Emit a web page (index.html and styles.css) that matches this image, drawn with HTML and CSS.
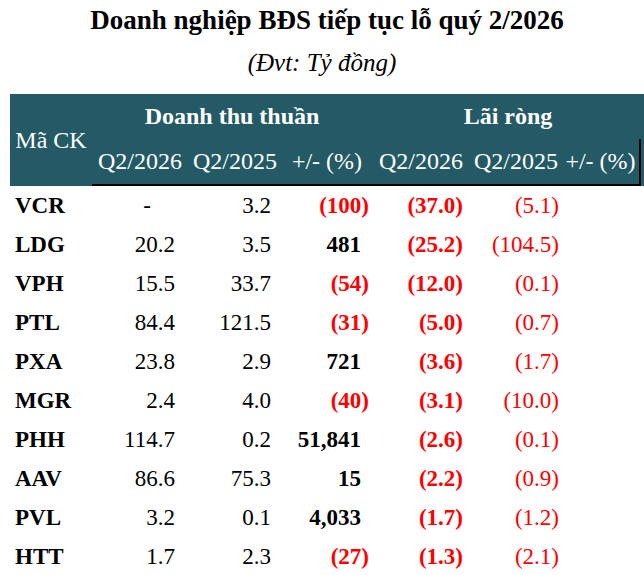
FILE: index.html
```html
<!DOCTYPE html>
<html lang="vi">
<head>
<meta charset="utf-8">
<title>Doanh nghiệp BĐS tiếp tục lỗ quý 2/2026</title>
<link rel="stylesheet" href="styles.css">
</head>
<body>
<h1 class="title">Doanh nghiệp BĐS tiếp tục lỗ quý 2/2026</h1>
<p class="unit">(Đvt: Tỷ đồng)</p>
<table class="report">
  <colgroup>
    <col class="w0"><col class="w1"><col class="w2"><col class="w3"><col class="w4"><col class="w5"><col class="w6"><col class="w7">
  </colgroup>
  <thead>
    <tr class="group-row">
      <th class="corner" rowspan="2">Mã CK</th>
      <th class="group" colspan="3">Doanh thu thuần</th>
      <th class="group" colspan="4">Lãi ròng</th>
    </tr>
    <tr class="sub-row">
      <th class="sub">Q2/2026</th>
      <th class="sub">Q2/2025</th>
      <th class="sub">+/- (%)</th>
      <th class="sub">Q2/2026</th>
      <th class="sub">Q2/2025</th>
      <th class="sub sub-last">+/- (%)</th>
      <th class="edge"></th>
    </tr>
  </thead>
  <tbody>
    <tr><td class="tk">VCR</td><td class="c1"><span class="dash">-</span></td><td class="c2">3.2</td><td class="c3 neg">(100)</td><td class="c4">(37.0)</td><td class="c5">(5.1)</td><td></td><td></td></tr>
    <tr><td class="tk">LDG</td><td class="c1">20.2</td><td class="c2">3.5</td><td class="c3 pos">481</td><td class="c4">(25.2)</td><td class="c5">(104.5)</td><td></td><td></td></tr>
    <tr><td class="tk">VPH</td><td class="c1">15.5</td><td class="c2">33.7</td><td class="c3 neg">(54)</td><td class="c4">(12.0)</td><td class="c5">(0.1)</td><td></td><td></td></tr>
    <tr><td class="tk">PTL</td><td class="c1">84.4</td><td class="c2">121.5</td><td class="c3 neg">(31)</td><td class="c4">(5.0)</td><td class="c5">(0.7)</td><td></td><td></td></tr>
    <tr><td class="tk">PXA</td><td class="c1">23.8</td><td class="c2">2.9</td><td class="c3 pos">721</td><td class="c4">(3.6)</td><td class="c5">(1.7)</td><td></td><td></td></tr>
    <tr><td class="tk">MGR</td><td class="c1">2.4</td><td class="c2">4.0</td><td class="c3 neg">(40)</td><td class="c4">(3.1)</td><td class="c5">(10.0)</td><td></td><td></td></tr>
    <tr><td class="tk">PHH</td><td class="c1">114.7</td><td class="c2">0.2</td><td class="c3 pos">51,841</td><td class="c4">(2.6)</td><td class="c5">(0.1)</td><td></td><td></td></tr>
    <tr><td class="tk">AAV</td><td class="c1">86.6</td><td class="c2">75.3</td><td class="c3 pos">15</td><td class="c4">(2.2)</td><td class="c5">(0.9)</td><td></td><td></td></tr>
    <tr><td class="tk">PVL</td><td class="c1">3.2</td><td class="c2">0.1</td><td class="c3 pos">4,033</td><td class="c4">(1.7)</td><td class="c5">(1.2)</td><td></td><td></td></tr>
    <tr><td class="tk">HTT</td><td class="c1">1.7</td><td class="c2">2.3</td><td class="c3 neg">(27)</td><td class="c4">(1.3)</td><td class="c5">(2.1)</td><td></td><td></td></tr>
  </tbody>
</table>
</body>
</html>
```
FILE: styles.css
```css
html, body {
  margin: 0;
  padding: 0;
  background: #ffffff;
}
body {
  font-family: "Liberation Serif", "Times New Roman", serif;
  color: #000000;
}
.title {
  margin: 0;
  height: 40px;
  line-height: 40px;
  font-size: 27px;
  font-weight: bold;
  text-align: center;
  padding-left: 10px;
}
.unit {
  margin: 0 0 9px 0;
  height: 45px;
  line-height: 45px;
  font-size: 25px;
  font-style: italic;
  text-align: center;
}
.report {
  margin-left: 10px;
  width: 634px;
  table-layout: fixed;
  border-collapse: separate;
  border-spacing: 0;
  font-family: "Liberation Serif", "Times New Roman", serif;
}
.w0 { width: 82px; }
.w1 { width: 96px; }
.w2 { width: 94px; }
.w3 { width: 90px; }
.w4 { width: 98px; }
.w5 { width: 92px; }
.w6 { width: 79px; }
.w7 { width: 3px; }

.report th {
  background: #235a65;
  color: #ffffff;
  font-size: 24px;
  padding: 0;
  white-space: nowrap;
}
.group-row th {
  height: 45px;
  line-height: 45px;
}
.corner {
  font-weight: normal;
  text-align: center;
  vertical-align: middle;
}
.group {
  font-weight: bold;
  text-align: center;
}
.sub-row th {
  height: 45px;
  line-height: 45px;
}
.sub {
  font-weight: normal;
  text-align: center;
  border-bottom: 2px solid #000000;
}
.sub-last {
  border-right: 2px solid #000000;
}
.edge {
  border: none;
}

.report td {
  height: 39px;
  line-height: 39px;
  padding: 0;
  font-size: 23px;
  text-align: right;
  vertical-align: middle;
  white-space: nowrap;
}
.report td.tk {
  text-align: left;
  padding-left: 5px;
  font-weight: bold;
}
.c1 { padding-right: 13px !important; }
.c2 { padding-right: 11px !important; }
.c3 { font-weight: bold; }
.c3.neg { color: #ff0000; padding-right: 3px !important; }
.c3.pos { color: #000000; padding-right: 11px !important; }
.c4 { color: #ff0000; font-weight: bold; padding-right: 7px !important; }
.c5 { color: #ff0000; padding-right: 3px !important; }
.dash {
  display: inline-block;
  padding-right: 24px;
}
```
